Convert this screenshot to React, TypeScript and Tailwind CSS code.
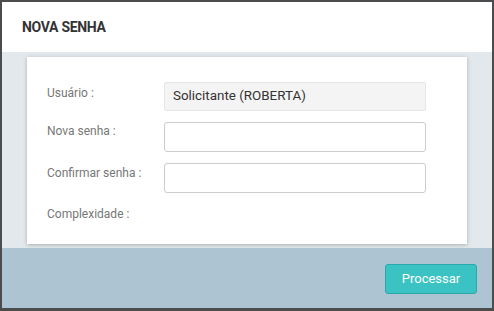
import React from "react";

function FieldRow({
    label,
    children,
    labelOffset = "pt-[4px]",
}: {
    label: string,
    children?: React.ReactNode,
    labelOffset?: string,
}) {
    return (
        <div className="flex items-start">
            <div className={`w-[117px] shrink-0 text-[12px] text-[#777] leading-[16px] ${labelOffset}`}>
                {label}
            </div>
            {children}
        </div>
    );
}

function App() {
    return (
        <div
            className="w-[494px] h-[311px] bg-[#4a4c4d] pt-[2px] pl-[2px] pr-[2px] pb-[3px] overflow-hidden"
            style={{ fontFamily: "Roboto, 'Liberation Sans', sans-serif" }}
        >
            <div className="flex flex-col h-full">
                {/* header */}
                <div className="h-[50px] shrink-0 bg-white flex items-center pl-[20px]">
                    <h1 className="text-[14px] font-bold text-[#333] tracking-[-0.3px]">NOVA SENHA</h1>
                </div>

                {/* body */}
                <div className="h-[196px] shrink-0 bg-[#e2e8eb] pt-[5px] pl-[25px]">
                    <div className="w-[440px] h-[187px] bg-white shadow-[0_1px_4px_rgba(0,0,0,0.25)] pl-[20px] pt-[25px] flex flex-col gap-[11px]">
                        <FieldRow label="Usuário :" labelOffset="pt-[3px]">
                            <div className="w-[262px] h-[29px] bg-[#f4f4f4] border border-[#e6e6e6] rounded-[2px] flex items-center pl-[8px] text-[13.4px] text-[#333]">
                                Solicitante (ROBERTA)
                            </div>
                        </FieldRow>
                        <FieldRow label="Nova senha :" labelOffset="pt-[1px]">
                            <div className="w-[262px] h-[30px] bg-white border border-[#cccccc] rounded-[3px]" />
                        </FieldRow>
                        <FieldRow label="Confirmar senha :" labelOffset="pt-[2px]">
                            <div className="w-[262px] h-[30px] bg-white border border-[#cccccc] rounded-[3px]" />
                        </FieldRow>
                        <FieldRow label="Complexidade :" labelOffset="pt-[2px]" />
                    </div>
                </div>

                {/* footer */}
                <div className="flex-1 bg-[#adc5d2] flex items-start justify-end pt-[16px] pr-[15px]">
                    <button className="w-[92px] h-[30px] bg-[#3bc3c4] border border-[#2aa8aa] rounded-[3px] text-white text-[13px]">
                        Processar
                    </button>
                </div>
            </div>
        </div>
    );
}

export default App
